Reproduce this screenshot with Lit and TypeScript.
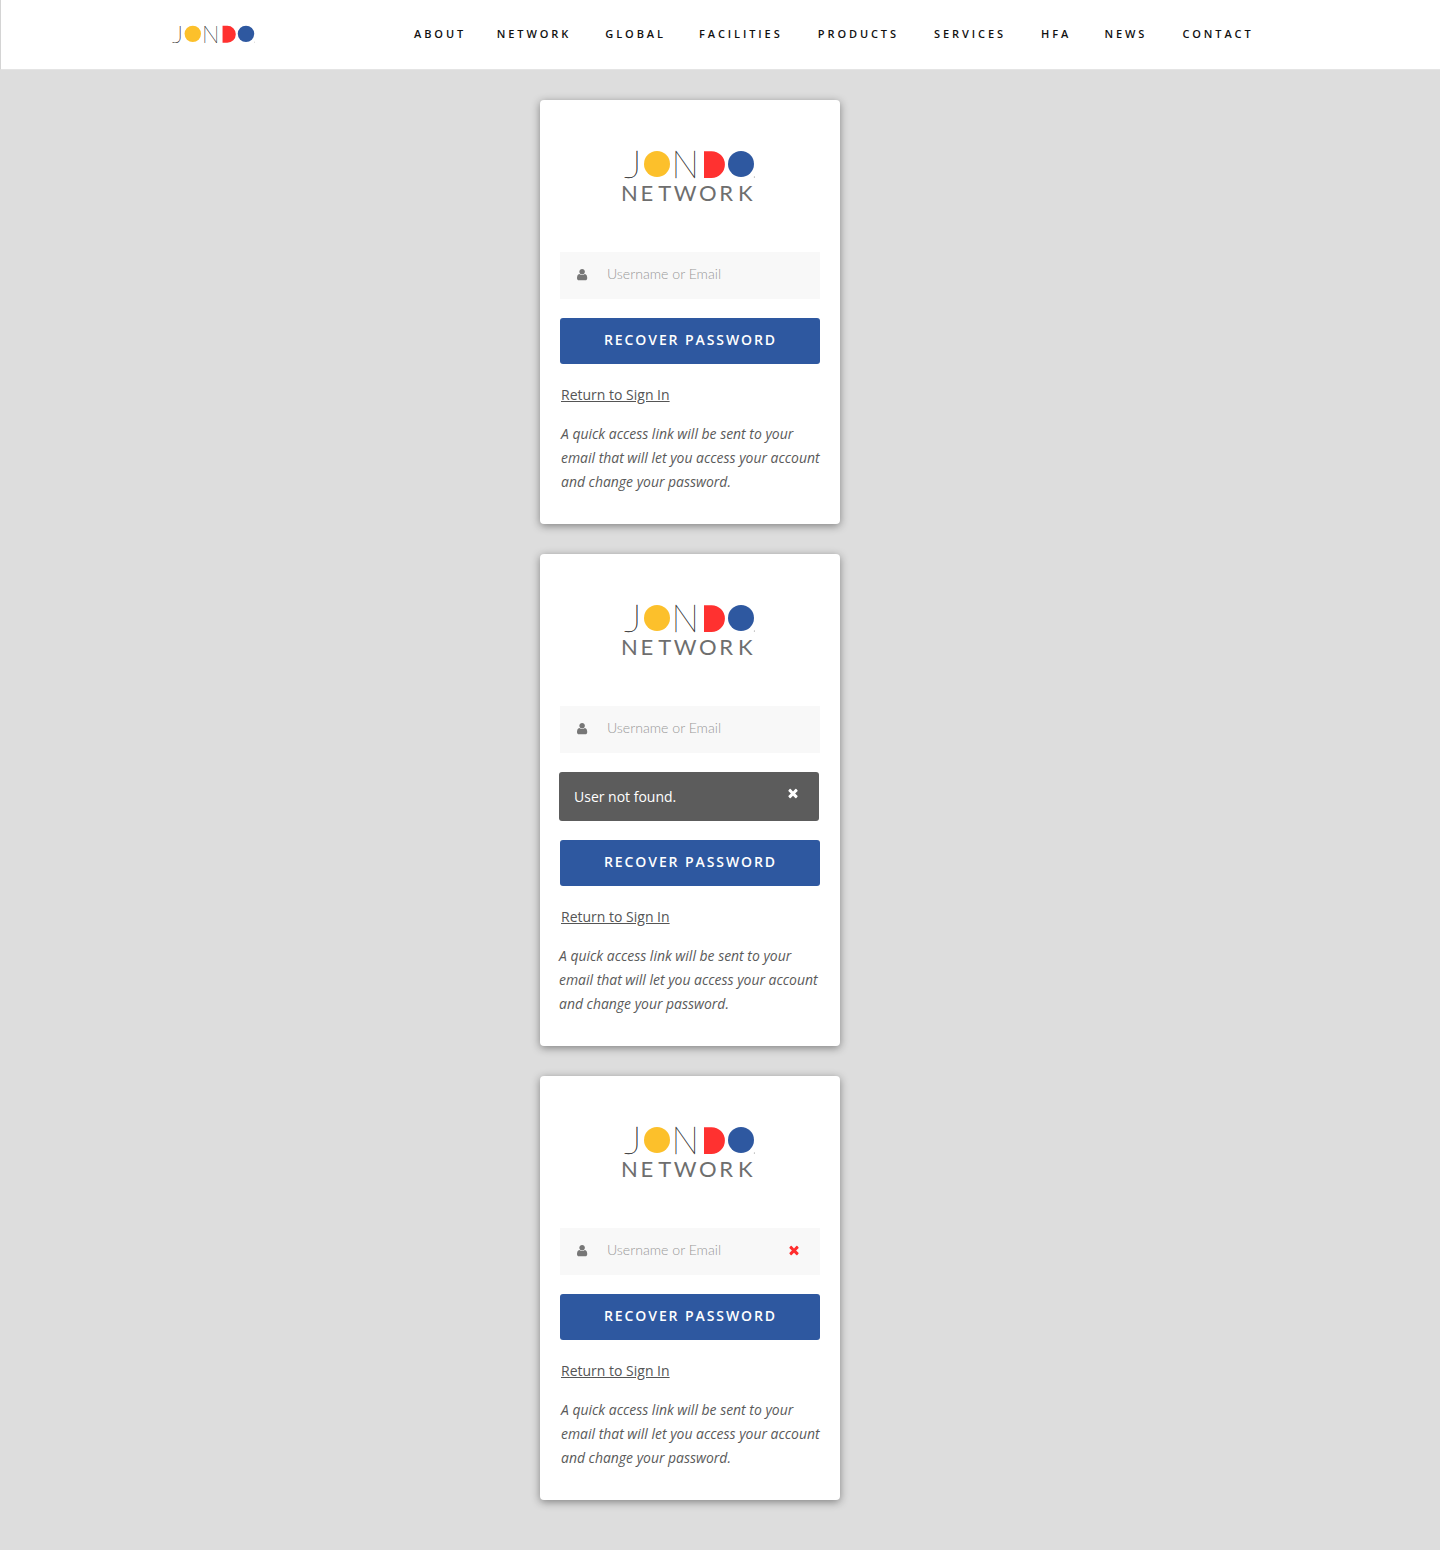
import { LitElement, html, css, svg } from "lit";
import { customElement } from "lit/decorators.js";

const userPath = "M1408 1277q0 120-73 189.5t-194 69.5h-874q-121 0-194-69.5t-73-189.5q0-53 3.5-103.5t14-109 26.5-108.5 43-97.5 62-81 85.5-53.5 111.5-20q9 0 42 21.5t74.5 48 108 48 133.5 21.5 133.5-21.5 108-48 74.5-48 42-21.5q61 0 111.5 20t85.5 53.5 62 81 43 97.5 26.5 108.5 14 109 3.5 103.5zm-320-893q0 159-112.5 271.5t-271.5 112.5-271.5-112.5-112.5-271.5 112.5-271.5 271.5-112.5 271.5 112.5 112.5 271.5z";
const timesPath = "M1490 1322q0 40-28 68l-136 136q-28 28-68 28t-68-28l-294-294-294 294q-28 28-68 28t-68-28l-136-136q-28-28-28-68t28-68l294-294-294-294q-28-28-28-68t28-68l136-136q28-28 68-28t68 28l294 294 294-294q28-28 68-28t68 28l136 136q28 28 28 68t-28 68l-294 294 294 294q28 28 28 68z";

const icon = (d: string, cls: string) => html`<svg class=${cls} viewBox="0 0 1792 1792" aria-hidden="true"><path d=${d} fill="currentColor"></path></svg>`;

const mark = svg`
  <text x="-1" y="28" class="thin" textLength="18" lengthAdjust="spacingAndGlyphs">J</text>
  <circle cx="32" cy="14" r="13" fill="#fcc02b"></circle>
  <text x="46.5" y="28" class="thin" textLength="27.5" lengthAdjust="spacingAndGlyphs">N</text>
  <path d="M79 1.2h7.5a13.4 13.4 0 0 1 0 26.8H79z" fill="#ff3130"></path>
  <circle cx="116" cy="14" r="13" fill="#2e58a0"></circle>
  <circle cx="129.4" cy="27" r=".6" fill="#888"></circle>
`;

@customElement("app-root")
export class AppRoot extends LitElement {
  static styles = css`
    :host { display: block; background: #ddd; min-height: 1550px; font-family: "Open Sans", sans-serif; }
    * { box-sizing: border-box; }
    header { height: 70px; background: #fff; border-left: 1px solid #d4d4d4; border-bottom: 1px solid #e4e4e4; display: flex; align-items: center; padding-left: 171px; }
    .brand { width: 84px; height: 19px; display: block; overflow: visible; }
    .thin { font-family: "Lato", sans-serif; font-weight: 100; font-size: 38px; fill: #222; stroke: #222; stroke-width: .3px; }
    nav { display: flex; margin-left: 158px; gap: 33.2px; padding-bottom: 2px; }
    nav a { font-size: 11px; font-weight: 600; letter-spacing: 2.9px; color: #111; white-space: nowrap; }
    nav a:first-child { margin-right: -2.5px; }
    nav a:nth-child(3) { margin-left: 1px; }
    nav a:nth-child(5), nav a:nth-child(6), nav a:nth-child(7), nav a:nth-child(9) { margin-left: 2px; }
    main { display: flex; flex-direction: column; align-items: center; gap: 30px; padding: 30px 60px 50px 0; }
    .card { width: 300px; background: #fff; border-radius: 4px; box-shadow: 0 2px 8px rgba(0,0,0,.42); padding: 50px 20px 30px; }
    .logo { display: flex; flex-direction: column; height: 102px; padding-left: 61px; }
    .logo-mark { display: block; width: 131px; height: 30px; margin-left: 3.5px; overflow: visible; }
    .net { margin: 2px 0 0 0; font-family: "Lato", sans-serif; font-weight: 400; font-size: 22px; line-height: 22px; letter-spacing: 2.6px; color: #6e6e6e; white-space: nowrap; }
    .net span { margin-left: 2.5px; }
    .field { height: 47px; background: #f8f8f8; display: flex; align-items: center; padding-left: 17px; padding-right: 19px; }
    .ico-user { width: 13px; height: 13px; color: #777; flex: none; }
    .ph { margin-left: 17px; font-family: "Lato", sans-serif; font-weight: 300; font-size: 14.1px; color: #999; flex: 1; padding-bottom: 4px; }
    .ico-x { width: 14px; height: 14px; color: #ff2d2d; flex: none; margin-top: -4px; }
    button { display: block; width: 260px; height: 46px; margin-top: 19px; border: 0; border-radius: 3px; background: #2e58a0; color: #fff; font: 600 14px "Open Sans", sans-serif; letter-spacing: 1.91px; text-align: center; padding: 0 0 4px 1px; }
    .alert { width: 260px; height: 49px; margin: 19px 0 0 -1px; background: #5c5c5c; border-radius: 3px; color: #fff; font-size: 14px; display: flex; align-items: center; justify-content: space-between; padding: 0 19px 0 15px; }
    .alert svg { width: 14px; height: 14px; color: #fff; margin-top: -8px; }
    .link { display: block; margin: 21px 0 0 1px; font-size: 14px; line-height: 20px; color: #555; text-decoration: underline; width: fit-content; }
    p { margin: 17px 0 0 1px; font-size: 13.95px; font-style: italic; line-height: 24px; color: #5a5a5a; white-space: nowrap; }
    .shift p { margin-left: -1px; }
  `;

  private card(kind: "plain" | "alert" | "error") {
    return html`<section class="card ${kind === "alert" ? "shift" : ""}">
      <div class="logo">
        <svg class="logo-mark" viewBox="0 0 131 30">${mark}</svg>
        <div class="net">NE<span>TWOR</span><span>K</span></div>
      </div>
      <div class="field">
        ${icon(userPath, "ico-user")}
        <span class="ph">Username or Email</span>
        ${kind === "error" ? icon(timesPath, "ico-x") : ""}
      </div>
      ${kind === "alert" ? html`<div class="alert"><span>User not found.</span>${icon(timesPath, "")}</div>` : ""}
      <button>RECOVER PASSWORD</button>
      <a class="link">Return to Sign In</a>
      <p>A quick access link will be sent to your<br />email that will let you access your account<br />and change your password.</p>
    </section>`;
  }

  render() {
    const items = ["ABOUT", "NETWORK", "GLOBAL", "FACILITIES", "PRODUCTS", "SERVICES", "HFA", "NEWS", "CONTACT"];
    return html`
      <header>
        <svg class="brand" viewBox="0 0 131 30">${mark}</svg>
        <nav>${items.map((t) => html`<a>${t}</a>`)}</nav>
      </header>
      <main>
        ${this.card("plain")}
        ${this.card("alert")}
        ${this.card("error")}
      </main>
    `;
  }
}
